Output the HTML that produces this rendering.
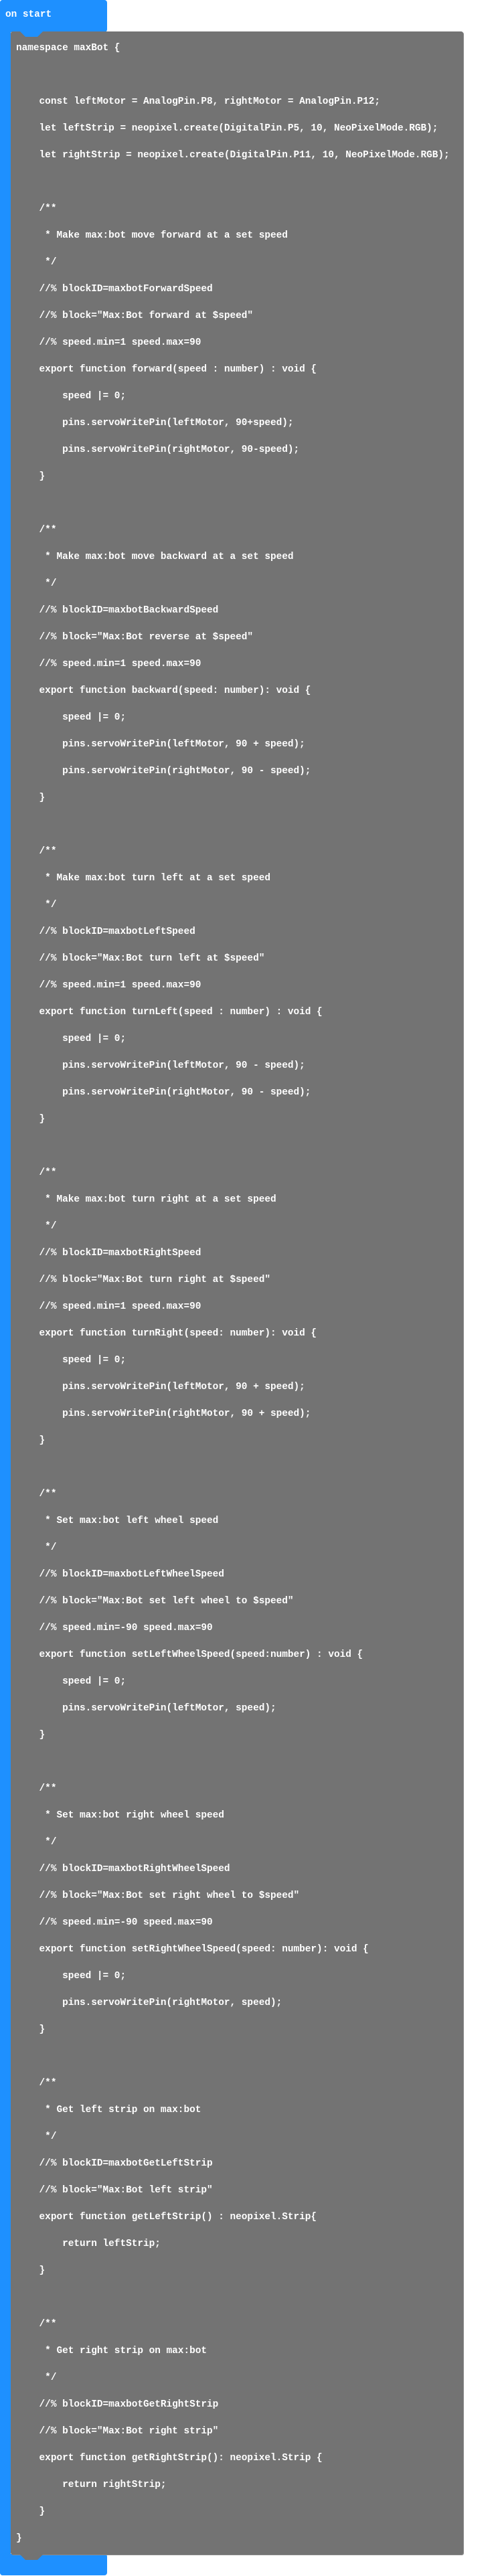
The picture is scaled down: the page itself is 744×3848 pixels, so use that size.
<!DOCTYPE html>
<html><head><meta charset="utf-8"><style>
html,body{margin:0;padding:0;background:#fff;width:744px;height:3848px;overflow:hidden;position:relative}
.blue{position:absolute;background:#1e90ff;border-radius:4px}
.gray{position:absolute;left:16px;top:47px;width:676px;height:3769px;background:#737373;border-radius:3px;box-shadow:1px 1px 0 #8a8a8a}
.hat{position:absolute;left:8px;top:14px;font:bold 14.4px "Liberation Mono",monospace;color:#fff}
pre{position:absolute;left:24px;top:52px;margin:0;font:bold 14.4px/40px "Liberation Mono",monospace;color:#fff;white-space:pre}
</style></head><body>
<div class="blue" style="left:0;top:0;width:160px;height:48px"></div>
<div class="blue" style="left:0;top:0;width:16px;height:3847px;border-radius:4px 0 0 4px"></div>
<div class="blue" style="left:0;top:3815px;width:160px;height:32px"></div>
<div class="hat">on start</div>
<div class="gray"></div>
<svg style="position:absolute;left:0;top:0" width="744" height="3848">
<path d="M30 47 L38 55 L56 55 L64 47 Z" fill="#1e90ff"/>
<path d="M30 3816 L38 3824 L56 3824 L64 3816 Z" fill="#737373"/>
</svg>
<pre>namespace maxBot {

    const leftMotor = AnalogPin.P8, rightMotor = AnalogPin.P12;
    let leftStrip = neopixel.create(DigitalPin.P5, 10, NeoPixelMode.RGB);
    let rightStrip = neopixel.create(DigitalPin.P11, 10, NeoPixelMode.RGB);

    /**
     * Make max:bot move forward at a set speed
     */
    //% blockID=maxbotForwardSpeed
    //% block="Max:Bot forward at $speed"
    //% speed.min=1 speed.max=90
    export function forward(speed : number) : void {
        speed |= 0;
        pins.servoWritePin(leftMotor, 90+speed);
        pins.servoWritePin(rightMotor, 90-speed);
    }

    /**
     * Make max:bot move backward at a set speed
     */
    //% blockID=maxbotBackwardSpeed
    //% block="Max:Bot reverse at $speed"
    //% speed.min=1 speed.max=90
    export function backward(speed: number): void {
        speed |= 0;
        pins.servoWritePin(leftMotor, 90 + speed);
        pins.servoWritePin(rightMotor, 90 - speed);
    }

    /**
     * Make max:bot turn left at a set speed
     */
    //% blockID=maxbotLeftSpeed
    //% block="Max:Bot turn left at $speed"
    //% speed.min=1 speed.max=90
    export function turnLeft(speed : number) : void {
        speed |= 0;
        pins.servoWritePin(leftMotor, 90 - speed);
        pins.servoWritePin(rightMotor, 90 - speed);
    }

    /**
     * Make max:bot turn right at a set speed
     */
    //% blockID=maxbotRightSpeed
    //% block="Max:Bot turn right at $speed"
    //% speed.min=1 speed.max=90
    export function turnRight(speed: number): void {
        speed |= 0;
        pins.servoWritePin(leftMotor, 90 + speed);
        pins.servoWritePin(rightMotor, 90 + speed);
    }

    /**
     * Set max:bot left wheel speed
     */
    //% blockID=maxbotLeftWheelSpeed
    //% block="Max:Bot set left wheel to $speed"
    //% speed.min=-90 speed.max=90
    export function setLeftWheelSpeed(speed:number) : void {
        speed |= 0;
        pins.servoWritePin(leftMotor, speed);
    }

    /**
     * Set max:bot right wheel speed
     */
    //% blockID=maxbotRightWheelSpeed
    //% block="Max:Bot set right wheel to $speed"
    //% speed.min=-90 speed.max=90
    export function setRightWheelSpeed(speed: number): void {
        speed |= 0;
        pins.servoWritePin(rightMotor, speed);
    }

    /**
     * Get left strip on max:bot
     */
    //% blockID=maxbotGetLeftStrip
    //% block="Max:Bot left strip"
    export function getLeftStrip() : neopixel.Strip{
        return leftStrip;
    }

    /**
     * Get right strip on max:bot
     */
    //% blockID=maxbotGetRightStrip
    //% block="Max:Bot right strip"
    export function getRightStrip(): neopixel.Strip {
        return rightStrip;
    }
}</pre>
</body></html>
